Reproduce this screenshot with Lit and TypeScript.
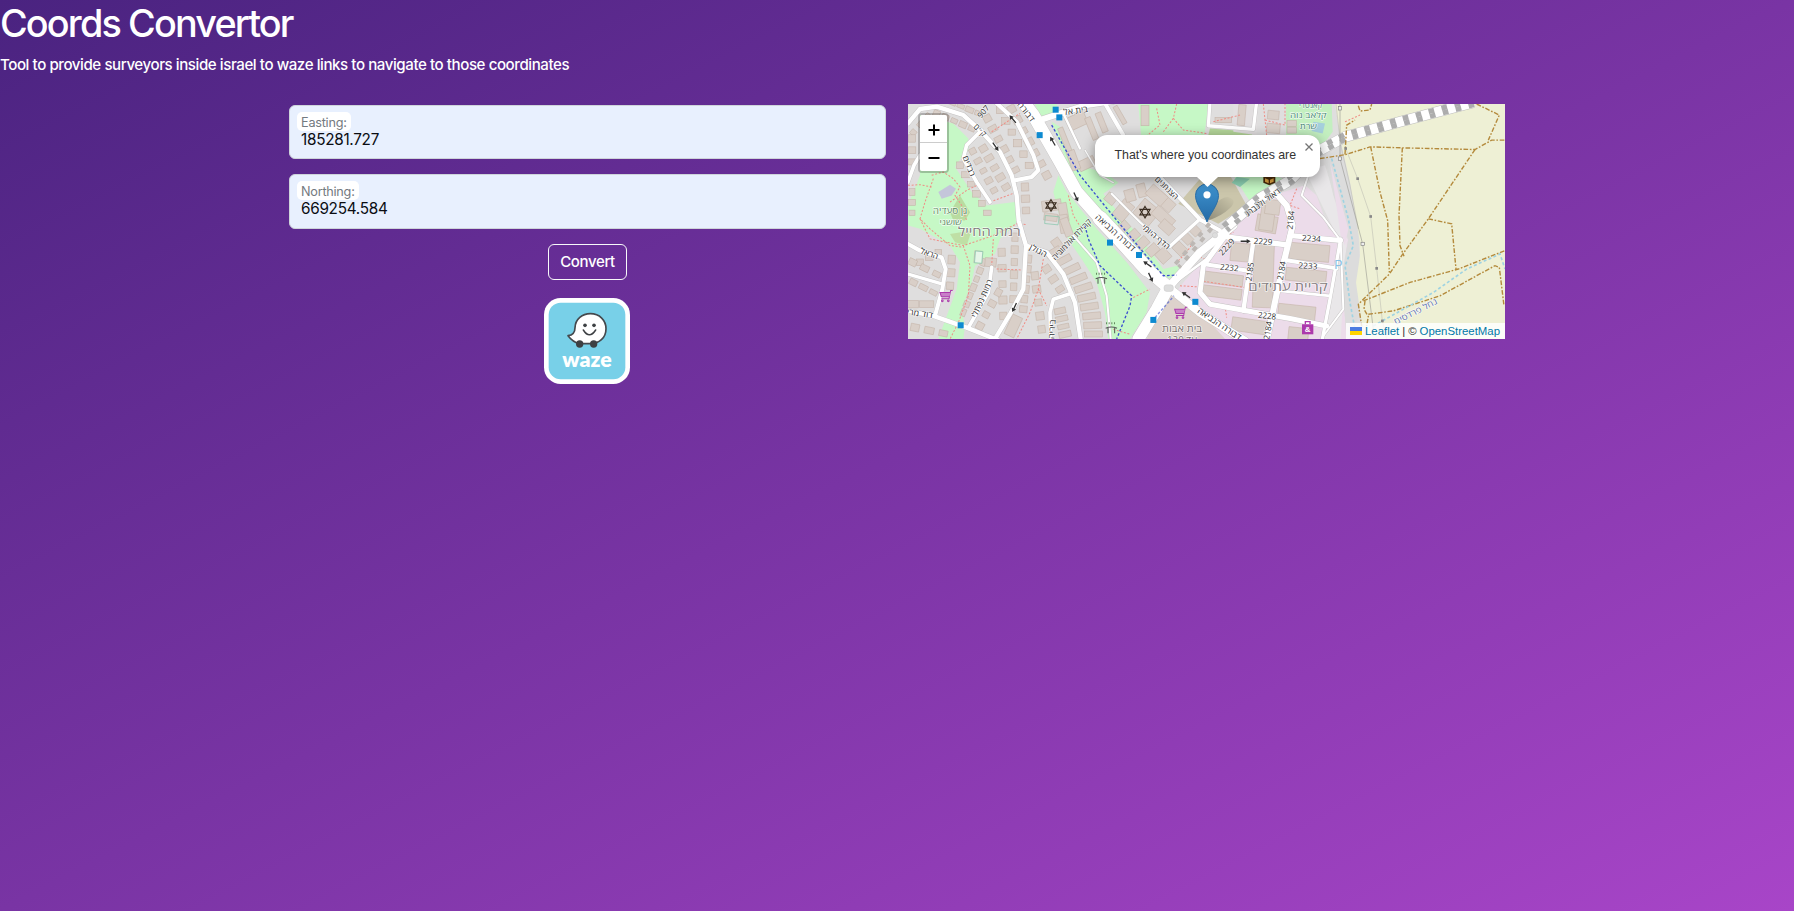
import { LitElement, html, svg, css, nothing } from "lit";
import { customElement, property } from "lit/decorators.js";

type Poly = [string, string];
type Road = [string, number];
/** text, x, y, font size, drawn length, rotation, colour */
type Label = [string, number, number, number, number, number?, string?];
type Block = [number, number, number, number, number];
/** x1, y1, x2, y2, count, width, height: evenly spaced houses along a line */
type Row = [number, number, number, number, number, number, number];

const LAND: Poly[] = [
  ["60,60 160,85 205,130 205,165 185,185 165,215 215,290 260,330 345,320 355,370 345,387 300,430 285,475 225,510 215,560 200,600 185,640 195,690 190,729 115,729 140,660 170,580 180,500 150,450 60,400 24,390 24,330 60,240", "#c6f8c6"],
  ["475,240 500,290 590,400 680,500 750,590 740,650 690,729 625,729 615,650 590,560 545,490 510,440 490,400 470,330 460,290", "#c6f8c6"],
  ["455,80 480,95 540,210 620,235 655,262 610,295 650,345 720,425 790,520 840,508 825,545 790,550 740,515 640,410 560,300 500,200", "#c6f8c6"],
  ["715,27 925,27 912,130 725,140", "#c6f8c6"],
  ["405,27 470,27 475,60 425,75", "#c6f8c6"],
  ["930,100 1055,110 1060,140 920,140", "#b5d79a"],
  ["835,325 900,250 990,240 1040,330 955,385", "#cbc6ab"],
  ["1000,240 1120,240 1180,262 1060,335", "#c6f8c6"],
  ["1010,245 1050,250 1020,275 995,262", "#8dd2b4"],
  ["1158,27 1295,27 1298,110 1268,150 1158,150", "#c3efc0"],
  ["1240,80 1275,85 1268,115 1235,108", "#a5cfdc"],
  ["1000,27 1075,27 1070,120 1000,110", "#e2dfe0"],
  ["850,560 1000,390 1150,290 1215,270 1250,300 1285,400 1345,430 1325,540 1340,729 740,729 790,640", "#ecdcea"],
  ["1215,225 1275,210 1340,430 1322,729 1270,729 1315,430", "#e9e7e9"],
  ["1275,190 1325,150 1375,400 1378,520 1370,729 1340,729 1325,540 1345,430 1300,300", "#dcdcdc"],
  ["1290,200 1345,400 1335,450 1322,420", "#ecdcea"],
  ["1305,27 1815,27 1815,729 1405,729 1385,680 1368,560 1380,480 1378,430 1350,260 1325,150", "#eef0d5"],
  ["115,290 150,268 168,280 155,300 125,310", "#c4c6da"],
  ["150,350 180,300 210,350 195,375 160,375", "#b9dca0"],
  ["150,415 215,405 200,450 165,440", "#bfdfa5"],
  ["800,590 860,620 940,690 975,729 740,729 770,660", "#ddd2cc"],
];

const ROADS: Road[] = [
  ["24,85 60,42 110,35 190,60 240,105 300,170 335,240 350,300 356,375 378,450 370,580 330,655 285,729", 13],
  ["285,20 350,80 400,180 415,225 395,245 345,255", 12],
  ["245,105 200,150 190,190 230,260 270,320", 11],
  ["60,180 42,210 24,260", 11],
  ["24,445 60,465 125,485 137,520 127,580 105,660", 12],
  ["24,535 128,565", 10],
  ["24,645 100,660 200,695 300,735", 13],
  ["275,515 265,590 205,695", 11],
  ["378,450 440,470 490,535 525,620 542,729", 13],
  ["515,592 460,610 450,650 452,729", 11],
  ["520,420 590,500 620,600 632,729", 6],
  ["365,15 400,60 440,130 480,200 530,290 600,368 660,432 740,520 805,575", 38],
  ["805,575 770,640 715,729", 36],
  ["600,368 660,432 740,520", 44],
  ["420,75 490,52 560,30 640,18", 18],
  ["490,55 540,160", 7],
  ["612,20 670,120 720,190", 12],
  ["555,165 600,240 640,262", 4],
  ["775,240 900,372 960,405", 12],
  ["635,295 720,380 800,450", 6],
  ["895,375 810,452", 10],
  ["930,20 925,92 1060,103 1070,20", 10],
  ["805,575 900,470 1000,390", 24],
  ["805,575 900,650 1035,735", 24],
  ["805,575 920,490 1000,385 1080,325", 8],
  ["980,415 910,510 900,590 930,625 1170,668 1280,690", 15],
  ["985,425 1160,448", 16],
  ["910,505 1045,525", 12],
  ["1060,438 1030,645", 13],
  ["1120,285 1160,330 1178,390 1145,525 1100,735", 18],
  ["1170,420 1322,435", 15],
  ["1150,492 1310,518", 12],
  ["1140,585 1290,600", 8],
  ["1322,430 1290,610 1266,735", 10],
  ["1225,240 1205,300 1270,365 1322,435 1330,640 1270,720", 6],
];

const RED: string[] = [
  "24,270 60,268 95,275", "95,240 130,230 160,250 180,275 165,300 185,330 200,375", "100,250 75,320 60,370 90,400 150,450 190,455",
  "150,320 200,285 235,268", "270,320 345,292", "190,450 210,510 205,600 175,680 150,729", "60,370 90,430 190,450 280,420 350,385 380,387",
  "275,110 360,55", "280,430 275,510", "290,520 370,523", "430,490 415,580 390,650 350,729", "415,580 440,630", "505,300 520,360 545,400",
  "770,40 780,90 730,130", "830,27 820,70 850,105 920,115", "820,70 790,110", "940,80 1020,60", "1090,27 1100,120", "1095,75 1155,90 1155,27",
  "840,570 890,573", "890,480 915,490 980,420 1000,410", "900,555 1035,575", "700,605 750,580", "975,630 980,665", "1190,280 1170,330 1200,340",
  "880,440 860,470 830,500", "1335,80 1380,60", "640,700 690,715",
];

const TRACKS: string[] = [
  "1260,190 1337,178 1410,155 1505,158 1725,163 1775,135 1815,135",
  "1412,155 1440,290 1463,375 1468,530",
  "1507,158 1497,360 1500,450 1512,482",
  "1725,163 1585,370 1505,480 1468,535 1375,625 1385,690",
  "1585,370 1655,385 1668,520",
  "1730,27 1798,60 1765,135",
  "1375,32 1380,48 1410,45 1415,27",
  "1335,178 1340,90 1365,75",
  "1395,615 1392,640 1405,662 1400,690",
  "1390,615 1530,560 1675,520 1815,465",
  "1405,655 1480,645 1620,600 1785,510 1798,515 1812,630",
];

const ROWS: Row[] = [
  [40, 112, 82, 62, 3, 16, 17], [110, 55, 215, 100, 5, 20, 18], [130, 12, 235, 55, 5, 22, 16],
  [262, 70, 345, 225, 6, 23, 21], [300, 45, 388, 210, 6, 22, 22], [250, 160, 318, 275, 5, 24, 20],
  [218, 168, 282, 285, 5, 20, 18], [180, 210, 262, 352, 6, 20, 20], [335, 42, 440, 240, 7, 24, 23],
  [36, 290, 36, 352, 3, 18, 20], [36, 130, 36, 200, 3, 20, 22],
  [375, 275, 378, 345, 3, 22, 24], [345, 425, 340, 610, 6, 19, 25], [305, 470, 310, 660, 5, 22, 24],
  [250, 500, 190, 650, 7, 15, 22], [295, 590, 240, 690, 4, 20, 22], [385, 490, 370, 640, 6, 20, 24],
  [60, 500, 115, 470, 3, 20, 20], [38, 500, 110, 535, 3, 24, 20], [155, 492, 150, 570, 3, 22, 26],
  [40, 560, 100, 590, 3, 24, 18], [35, 625, 80, 625, 2, 40, 22], [45, 695, 130, 712, 3, 26, 22],
  [405, 540, 425, 700, 5, 22, 24], [440, 520, 480, 580, 3, 24, 22], [480, 645, 495, 715, 4, 34, 18],
];

const BLOCKS: Block[] = [
  [497, 140, 16, 90, -22], [530, 78, 60, 40, -25], [605, 82, 18, 62, -22], [560, 205, 52, 30, -25], [575, 100, 18, 70, -22],
  [455, 330, 58, 32, -8], [490, 350, 26, 55, -10], [452, 365, 40, 22, 8], [492, 385, 26, 55, -8], [735, 62, 24, 60, 0],
  [520, 195, 26, 60, -20], [660, 60, 14, 60, -30], [632, 310, 32, 28, 40], [670, 345, 40, 60, 40], [740, 350, 62, 58, 40],
  [690, 300, 30, 36, -15], [725, 285, 26, 40, -15], [795, 320, 60, 34, 42], [770, 300, 60, 38, 42], [790, 365, 70, 34, 42],
  [670, 395, 28, 36, 48], [700, 420, 28, 36, 48], [728, 442, 28, 36, 48], [758, 463, 28, 36, 48], [790, 480, 38, 36, 48],
  [800, 395, 44, 30, 42], [840, 460, 38, 30, 45], [862, 430, 30, 26, 45], [885, 405, 30, 26, 45],
  [340, 690, 32, 64, 25], [500, 395, 24, 56, -20], [475, 450, 26, 46, -35],
  [460, 470, 46, 20, -30], [490, 494, 50, 20, -28], [515, 520, 52, 20, -25], [535, 548, 52, 20, -22], [550, 576, 54, 20, -18],
  [560, 604, 54, 20, -12], [568, 632, 54, 20, -8], [575, 660, 54, 20, -5], [578, 688, 54, 20, -2], [580, 714, 54, 18, 0],
  [970, 75, 50, 16, 0], [1025, 60, 22, 62, 5], [1120, 60, 34, 26, 5], [1175, 85, 28, 18, 0], [1175, 105, 28, 18, 0], [1120, 100, 40, 28, 5],
  [1100, 385, 62, 50, 10], [1102, 365, 42, 80, 8], [1020, 470, 56, 54, 5], [1090, 540, 60, 190, 2],
  [970, 550, 118, 34, 7], [966, 590, 118, 32, 7], [1228, 470, 120, 50, 5], [1218, 540, 122, 38, 6], [1190, 650, 112, 44, 6],
  [1050, 690, 110, 40, 8], [1195, 715, 60, 40, 6], [1118, 335, 44, 44, 8], [235, 484, 24, 36, 5], [272, 500, 34, 26, 5],
];

const LABELS: Label[] = [
  ["רמת החייל", 268, 421, 38, 188, 0, "#857d81"], ["גן סעדיה", 150, 357, 26, 103, 0, "#5f8a66"], ["שושני", 152, 388, 25, 67, 0, "#5f8a66"],
  ["קריית עתידים", 1164, 586, 36, 238, 0, "#857d81"], ["בית אבות", 846, 707, 29, 120, 0, "#77706f"], ["עד 120", 846, 741, 29, 90, 0, "#77706f"],
  ["קאנטרי", 1232, 38, 24, 70, 0, "#4b8a78"], ["קלאב נוה", 1225, 70, 25, 110, 0, "#4b8a78"], ["שרת", 1225, 103, 25, 52, 0, "#4b8a78"],
  ["907", 250, 50, 24, 42, -50], ["ק״ם", 240, 105, 25, 42, 45], ["רבדים", 207, 212, 24, 64, 68], ["דבורה", 378, 50, 25, 68, 52], ["בית אל", 527, 47, 26, 74, -8],
  ["דבורה הנביאה", 646, 412, 26, 152, 42], ["דבורה הנביאה", 958, 684, 26, 152, 34], ["הראל", 88, 474, 25, 56, 20], ["דוד מרי", 60, 653, 25, 78, 8],
  ["רמות נפתלי", 246, 608, 26, 122, -66], ["הגולן", 415, 465, 25, 56, 28], ["קהילת אולמוביה", 515, 432, 25, 160, -46], ["ביריה", 456, 700, 25, 58, -86],
  ["הצנחנים", 800, 278, 24, 88, 44], ["הדף היומי", 768, 424, 25, 102, 40], ["ראול ולנברג", 1088, 321, 25, 124, -36],
  ["2229", 980, 454, 25, 58, -47], ["2229", 1089, 438, 25, 56, 4], ["2232", 988, 516, 25, 56, 5], ["2185", 1050, 528, 25, 56, -82],
  ["2184", 1145, 525, 25, 56, -80], ["2184", 1104, 704, 25, 56, -80], ["2184", 1172, 374, 25, 56, -84], ["2228", 1101, 660, 25, 54, 6],
  ["2234", 1234, 429, 25, 57, 4], ["2233", 1224, 511, 25, 57, 4], ["נחל פרדסים", 1547, 647, 25, 142, -27, "#5f74b0"],
];

const STOPS = [[467, 44], [478, 67], [419, 120], [630, 441], [717, 478], [760, 672], [886, 618], [182, 688]];
const ARROWS = [[338, 72, 50], [287, 155, -125], [458, 138, 60], [528, 305, -115], [343, 635, -65], [742, 505, 35], [752, 545, -115], [1037, 437, 180], [858, 597, 35]];
const PYLONS = [[1320, 40], [1320, 190], [1388, 445]];
const POLES = [[1337, 160], [1373, 250], [1412, 363], [1430, 518], [1447, 675]];

const rect = ([x, y, w, h, r]: Block) =>
  svg`<rect x=${x - w / 2} y=${y - h / 2} width=${w} height=${h} transform="rotate(${r} ${x} ${y})"/>`;

const houses = ([x1, y1, x2, y2, n, w, h]: Row) => {
  const angle = (Math.atan2(y2 - y1, x2 - x1) * 180) / Math.PI - 90;
  return Array.from({ length: n }, (_, i) => {
    const t = n > 1 ? i / (n - 1) : 0;
    const tilt = w === h ? 0 : angle > -60 && angle < 60 ? angle : angle + 90;
    return rect([x1 + (x2 - x1) * t, y1 + (y2 - y1) * t, w + (i % 2) * 3, h - (i % 3) * 2, tilt]);
  });
};

@customElement("street-map")
class StreetMap extends LitElement {
  static styles = css`
    :host { display: block; position: relative; height: 235px; overflow: hidden; background: #ddd; font: 12px "Liberation Sans", Helvetica, Arial, sans-serif; }
    .tiles { display: block; width: 100%; height: 100%; }
    .build { fill: #d9cfc8; stroke: #c3b2a6; stroke-width: 1.6; }
    .casing { fill: none; stroke: #c4c2c2; stroke-linejoin: round; stroke-linecap: round; }
    .road { fill: none; stroke: #fff; stroke-linejoin: round; stroke-linecap: round; }
    .red { fill: none; stroke: #f08d85; stroke-width: 3; stroke-dasharray: 6 5; }
    .track { fill: none; stroke: #b48a3c; stroke-width: 4.2; stroke-dasharray: 14 5 5 5; }
    .stream { fill: none; stroke: #9fd3e2; stroke-width: 5; stroke-dasharray: 9 7; }
    .cycle { fill: none; stroke: #3b4fd0; stroke-width: 4; stroke-dasharray: 8 6; }
    .label { font-family: "Open Sans", "Noto Sans", "DejaVu Sans", sans-serif; text-anchor: middle; paint-order: stroke; stroke: #fff; stroke-opacity: 0.75; stroke-width: 4px; stroke-linejoin: round; }
    .zoom { position: absolute; left: 10px; top: 9px; border: 2px solid rgba(0, 0, 0, 0.22); border-radius: 4px; background-clip: padding-box; }
    .zoom button { display: grid; place-items: center; box-sizing: border-box; width: 27px; height: 28px; border: 0; padding: 2px 0 0; background: #fff; }
    .zoom button:first-child { border-bottom: 1px solid #ccc; border-radius: 2px 2px 0 0; }
    .zoom button:last-child { border-radius: 0 0 2px 2px; }
    .popup { position: absolute; left: 187px; top: 31px; width: 225px; height: 42px; box-sizing: border-box; padding-left: 19.5px; border-radius: 12px; background: #fff; color: #333; box-shadow: 0 3px 14px rgba(0, 0, 0, 0.4); font-size: 12.4px; letter-spacing: -0.04px; line-height: 41px; white-space: nowrap; }
    .tip { position: absolute; left: 289px; top: 73px; width: 21px; height: 10px; background: #fff; clip-path: polygon(0 0, 100% 0, 50% 100%); }
    .close { position: absolute; right: 7px; top: 8px; width: 8px; height: 8px; }
    .pin { position: absolute; left: 286px; top: 79px; width: 42px; height: 41px; }
    .credit { position: absolute; right: 0; bottom: 0; height: 16px; display: flex; align-items: center; gap: 3px; padding: 0 5px 0 4px; background: rgba(255, 255, 255, 0.82); color: #333; font-size: 11.4px; white-space: nowrap; }
    .credit a { color: #0078a8; }
    .flag { width: 12px; height: 8px; }
  `;

  render() {
    return html`
      <svg class="tiles" viewBox="24 27 1791 702" preserveAspectRatio="none">
        <rect x="24" y="27" width="1791" height="702" fill="#dfdede" />
        ${LAND.map(([p, c]) => svg`<polygon points=${p} fill=${c}/>`)}
        <g class="build">${ROWS.map(houses)}${BLOCKS.map(rect)}</g>
        ${RED.map((p) => svg`<polyline class="red" points=${p}/>`)}
        ${ROADS.map(([p, w]) => svg`<polyline class="casing" points=${p} stroke-width=${w + 2.5}/>`)}
        ${ROADS.map(([p, w]) => svg`<polyline class="road" points=${p} stroke-width=${w}/>`)}
        <polyline points="975,398 1080,308 1170,255 1260,165 1335,125 1500,80 1720,22" fill="none" stroke="#bdbdbd" stroke-width="33" />
        <polyline points="975,398 1080,308 1170,255 1260,165 1335,125 1500,80 1720,22" fill="none" stroke="#fff" stroke-width="30" />
        <g fill="none" stroke="#adadad" stroke-width="15" stroke-dasharray="17 23">
          <polyline points="970,392 1075,302 1165,249 1256,158 1333,118 1498,73 1718,15" />
          <polyline stroke-dashoffset="6" points="980,404 1085,314 1175,261 1264,171 1337,132 1502,87 1722,29" />
        </g>
        <g fill="none" stroke="#bdb8b4" stroke-width="12" stroke-dasharray="15 21">
          <polyline points="826,505 862,464 930,382" />
          <polyline points="836,515 872,474 940,392" stroke-dashoffset="6" />
        </g>
        <g fill="none" stroke="#b9b9b0" stroke-width="1.6">
          <polyline points="1308,27 1322,150 1350,270 1375,400" />
          <polyline points="1337,160 1373,250 1412,363 1430,518 1447,675 1460,729" />
          <polyline points="1320,27 1320,190 1388,445 1420,700" stroke="#8d8d88" />
        </g>
        ${TRACKS.map((p) => svg`<polyline class="track" points=${p}/>`)}
        <polyline class="stream" points="1295,190 1345,370 1360,450 1335,510 1350,620 1365,700" />
        <polyline class="stream" points="1420,690 1600,590 1700,520 1800,475 1815,520" />
        <polyline class="cycle" points="455,90 540,240 620,338 730,470 790,540 830,538" />
        <polyline class="cycle" points="555,390 565,430 600,510 695,600 690,630 650,729" />
        <polyline class="cycle" points="765,665 822,600" opacity=".6" />
        <rect x="792" y="567" width="28" height="20" rx="8" fill="#ddd" stroke="#bbb" />
        <circle cx="945" cy="419" r="8" fill="#ddd" stroke="#bbb" />
        <g fill="none" stroke="#80c4a8" stroke-width="2">
          <rect x="225" y="467" width="22" height="35" transform="rotate(5 236 484)" fill="#e6f5e8" />
          <path d="M436 360l42 4l-4 24l-40 -4z" />
        </g>
        ${STOPS.map(([x, y]) => svg`<rect x=${x - 9} y=${y - 9} width="18" height="18" fill="#0d8ad0"/>`)}
        ${ARROWS.map(([x, y, r]) => svg`<path d="M-15 0L-3 -7V-2H15V2H-3V7Z" fill="#333" transform="translate(${x} ${y}) rotate(${r})"/>`)}
        ${PYLONS.map(([x, y]) => svg`<rect x=${x - 5} y=${y - 5} width="10" height="10" fill="#eee" stroke="#777" stroke-width="1.8"/>`)}
        ${POLES.map(([x, y]) => svg`<rect x=${x - 4} y=${y - 4} width="8" height="8" fill="#888"/>`)}
        ${[[453, 330], [735, 350]].map(([x, y]) => svg`<g transform="translate(${x} ${y})" fill="none" stroke="#3b2d20" stroke-width="3.600"><path d="M0 -17L15 8H-15Z"/><path d="M0 17L15 -8H-15Z"/></g>`)}
        ${[[138, 600], [842, 650]].map(([x, y]) => svg`<g transform="translate(${x} ${y})" fill="none" stroke="#ac39ac" stroke-width="3"><path d="M20 -16H14L9 9H-14"/><path d="M12 -10H-18L-14 3H10" fill="#c880c8"/><circle cx="-11" cy="15" r="2.500"/><circle cx="7" cy="15" r="2.500"/></g>`)}
        ${[[604, 550], [634, 698]].map(([x, y]) => svg`<path d="M-17 -1Q0 -9 17 -1M-10 -4V14M10 -4V14" transform="translate(${x} ${y})" fill="none" stroke="#555" stroke-width="3"/><path d="M-16 -16H16" transform="translate(${x} ${y})" stroke="#668a60" stroke-width="6" stroke-dasharray="3 5"/>`)}
        <g transform="translate(1223 697)"><rect x="-17" y="-12" width="34" height="30" fill="#ac39ac" /><path d="M-7 -12V-20H7V-12" fill="none" stroke="#ac39ac" stroke-width="4" /><text y="12" text-anchor="middle" font-size="24" font-weight="bold" fill="#fff">&amp;</text></g>
        <g transform="translate(1108 252)"><path d="M-18 -22H18V10L0 18L-18 10Z" fill="#4a2b0b" /><path d="M-13 -3L-2 1V12L-13 7ZM13 -3L2 1V12L13 7Z" fill="#e3a844" /></g>
        <text x="1315" y="521" text-anchor="middle" font-size="37" fill="#87bfe3">P</text>
        ${LABELS.map(([t, x, y, size, len, r = 0, c = "#333"]) => svg`<text class="label" x=${x} y=${y} dy=${r ? size * 0.34 : 0} font-size=${size} textLength=${len || nothing} lengthAdjust="spacingAndGlyphs" fill=${c} transform="rotate(${r} ${x} ${y})">${t}</text>`)}
      </svg>
      <svg class="pin" viewBox="0 0 42 41">
        <defs>
          <linearGradient id="pinFill" x1="0" y1="0" x2="0" y2="1"><stop offset="0" stop-color="#3f94d0" /><stop offset="1" stop-color="#2469a5" /></linearGradient>
          <linearGradient id="pinShade" x1="0" y1="1" x2="1" y2="0"><stop offset="0" stop-color="#000" stop-opacity=".5" /><stop offset="1" stop-color="#000" stop-opacity="0" /></linearGradient>
        </defs>
        <path d="M13 38Q20 15 34 14Q44 17 36 25Q28 33 13 38Z" fill="url(#pinShade)" opacity=".6" />
        <path d="M13 39C11 32 1.500 22 1.500 12.500A11.500 11.500 0 0 1 24.500 12.500C24.500 22 15 32 13 39Z" fill="url(#pinFill)" stroke="#2a6ea6" stroke-width="1" />
        <circle cx="13" cy="11.800" r="3.600" fill="#fff" />
      </svg>
      <div class="popup">
        That's where you coordinates are
        <svg class="close" viewBox="0 0 8 8"><path d="M.5.5L7.500 7.500M7.500.5L.5 7.500" stroke="#757575" stroke-width="1.300" /></svg>
      </div>
      <div class="tip"></div>
      <div class="zoom">
        <button aria-label="Zoom in"><svg width="12" height="12" viewBox="0 0 12 12"><path d="M6 .5V11.500M.5 6H11.500" stroke="#000" stroke-width="2" /></svg></button>
        <button aria-label="Zoom out"><svg width="12" height="12" viewBox="0 0 12 12"><path d="M.5 6H11.500" stroke="#000" stroke-width="2" /></svg></button>
      </div>
      <div class="credit">
        <svg class="flag" viewBox="0 0 12 8"><path fill="#4c7be1" d="M0 0h12v4H0z" /><path fill="#ffd500" d="M0 4h12v4H0z" /></svg>
        <a>Leaflet</a><span>|</span><span>©</span><a>OpenStreetMap</a>
      </div>
    `;
  }
}

@customElement("coord-field")
class CoordField extends LitElement {
  @property() label = "";
  @property() value = "";
  static styles = css`
    :host { display: block; box-sizing: border-box; height: 54.4px; padding: 6px 6.5px 0; border: 1px solid #ced4da; border-radius: 6px; background: #e8f0fe; }
    .tag { display: block; width: max-content; height: 19px; padding: 0 4.5px; border-radius: 5px; background: #fff; color: #747a80; font-size: 12.7px; line-height: 21px; letter-spacing: -0.25px; }
    .value { padding-left: 4.5px; color: #0b0d12; font-size: 15.3px; line-height: 18px; letter-spacing: -0.28px; }
  `;
  render() {
    return html`<span class="tag">${this.label}</span><div class="value">${this.value}</div>`;
  }
}

@customElement("app-root")
class AppRoot extends LitElement {
  static styles = css`
    :host { display: block; box-sizing: border-box; height: 911px; overflow: hidden; background: linear-gradient(to bottom right, #4a2380, #a845c8); color: #fff; font-family: Inter, "Liberation Sans", sans-serif; }
    h1 { margin: 0; height: 54px; font-size: 37.8px; line-height: 46px; font-weight: 550; letter-spacing: -1.85px; }
    .lead { margin: 0; height: 50px; font-size: 15.1px; line-height: 21px; letter-spacing: -0.43px; font-weight: 450; }
    main { display: grid; grid-template-columns: 597px 597px; gap: 22px; justify-content: center; }
    form { display: flex; flex-direction: column; align-items: center; padding-top: 1px; }
    coord-field { width: 100%; margin-bottom: 15.100px; }
    .convert { box-sizing: border-box; width: 79px; height: 36px; padding: 0; border: 1px solid #f8f9fa; border-radius: 6px; background: none; color: #fff; font: 450 15px Inter, sans-serif; letter-spacing: -0.35px; }
    .waze { display: block; width: 86px; height: 86px; margin: 17.800px 1px 0 0; }
    .brand { font: 800 62px Lato, Inter, sans-serif; fill: #fff; }
  `;
  render() {
    return html`
      <h1>Coords Convertor</h1>
      <p class="lead">Tool to provide surveyors inside israel to waze links to navigate to those coordinates</p>
      <main>
        <form>
          <coord-field label="Easting:" value="185281.727"></coord-field>
          <coord-field label="Northing:" value="669254.584"></coord-field>
          <button class="convert" type="button">Convert</button>
          <svg class="waze" viewBox="43 205 258 258">
            <rect x="43" y="205" width="258" height="258" rx="50" fill="#fff" />
            <rect x="57" y="219" width="230" height="230" rx="36" fill="#78d0e8" />
            <path d="M115 318C130 316 136 308 136 294C137 268 158 252 182 252C210 252 229 272 229 297C229 325 208 342 182 342H150C136 339 124 330 115 318Z" fill="#fff" stroke="#45494d" stroke-width="5" stroke-linejoin="round" />
            <g fill="#3d4043"><circle cx="150" cy="343" r="11" /><circle cx="192" cy="343" r="11" /><circle cx="166" cy="287" r="5.500" /><circle cx="193" cy="287" r="5.500" /></g>
            <path d="M161 301Q179 330 198 301" fill="none" stroke="#3d4043" stroke-width="4.500" stroke-linecap="round" />
            <text class="brand" x="98" y="412" textLength="148" lengthAdjust="spacingAndGlyphs">waze</text>
          </svg>
        </form>
        <street-map></street-map>
      </main>
    `;
  }
}
